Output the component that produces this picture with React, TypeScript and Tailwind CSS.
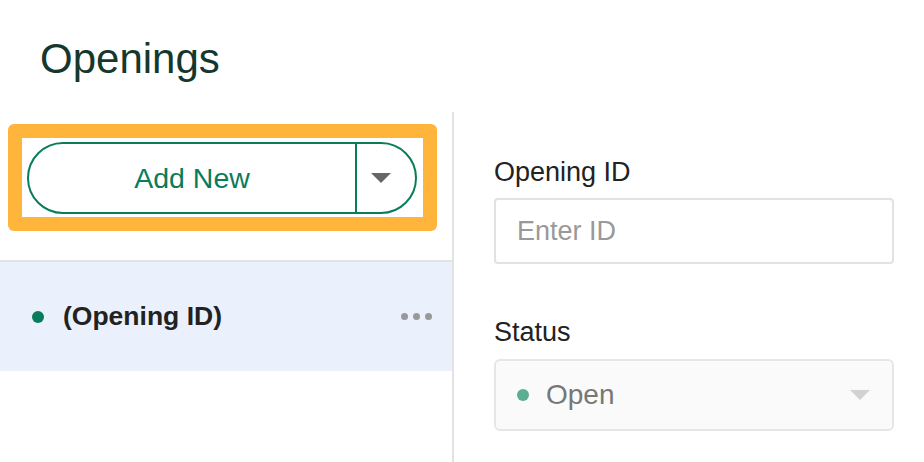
export default function App() {
  return (
    <div className="w-[924px] h-[462px] overflow-hidden bg-white" style={{ fontFamily: '"Liberation Sans", Arial, sans-serif' }}>
      <div className="h-[112px] pl-[40px] pt-[36px]">
        <h1 className="text-[42px] leading-[46px] text-[#15372c]">Openings</h1>
      </div>

      <div className="flex h-[350px]">
        {/* left list column */}
        <div className="w-[454px] shrink-0 border-r-2 border-[#e2e2e2]">
          <div className="pt-[12px] pl-[8px] pr-[15px]">
            <div className="rounded-[6px] bg-[#ffb43c] p-[14px]">
              <div className="bg-white pt-[4px] pb-[3px] pl-[5px] pr-[6px]">
                <div className="flex h-[72px] rounded-full border-2 border-[#087c5b]">
                  <div className="flex flex-1 items-center justify-center text-[28.5px] text-[#087c5b]">Add New</div>
                  <div className="flex w-[60px] items-center justify-center border-l-2 border-[#087c5b] pr-[10px]">
                    <svg width="20" height="10" viewBox="0 0 20 10">
                      <path d="M0 0h20L10 10z" fill="#666" />
                    </svg>
                  </div>
                </div>
              </div>
            </div>
          </div>

          <div className="mt-[29px] h-[2px] bg-[#e2e2e2]" />

          <div className="flex h-[109px] items-center bg-[#eaf1fc] pl-[32px] pr-[20px]">
            <span className="h-[12px] w-[12px] rounded-full bg-[#087c5b]" />
            <span className="ml-[19px] flex-1 text-[26.5px] font-bold text-[#222]">(Opening ID)</span>
            <div className="flex gap-[5px]">
              <span className="h-[7px] w-[7px] rounded-full bg-[#999]" />
              <span className="h-[7px] w-[7px] rounded-full bg-[#999]" />
              <span className="h-[7px] w-[7px] rounded-full bg-[#999]" />
            </div>
          </div>
        </div>

        {/* right form column */}
        <div className="flex-1 pl-[40px] pt-[44px]">
          <label className="block text-[27px] leading-[32px] text-[#222]">Opening ID</label>
          <input
            placeholder="Enter ID"
            className="mt-[10px] block h-[66px] w-[400px] rounded-[4px] border-2 border-[#e2e2e2] px-[21px] text-[27px] text-[#222] placeholder:text-[#999] focus:outline-none"
          />

          <label className="mt-[52px] block text-[27px] leading-[32px] text-[#222]">Status</label>
          <div className="mt-[11px] flex h-[72px] w-[400px] items-center rounded-[6px] border-2 border-[#e6e6e6] bg-[#fafafa] pl-[21px] pr-[22px]">
            <span className="h-[12px] w-[12px] rounded-full bg-[#5aae92]" />
            <span className="ml-[17px] flex-1 text-[28px] text-[#777]">Open</span>
            <svg width="20" height="10" viewBox="0 0 20 10">
              <path d="M0 0h20L10 10z" fill="#d2d2d2" />
            </svg>
          </div>
        </div>
      </div>
    </div>
  );
}
